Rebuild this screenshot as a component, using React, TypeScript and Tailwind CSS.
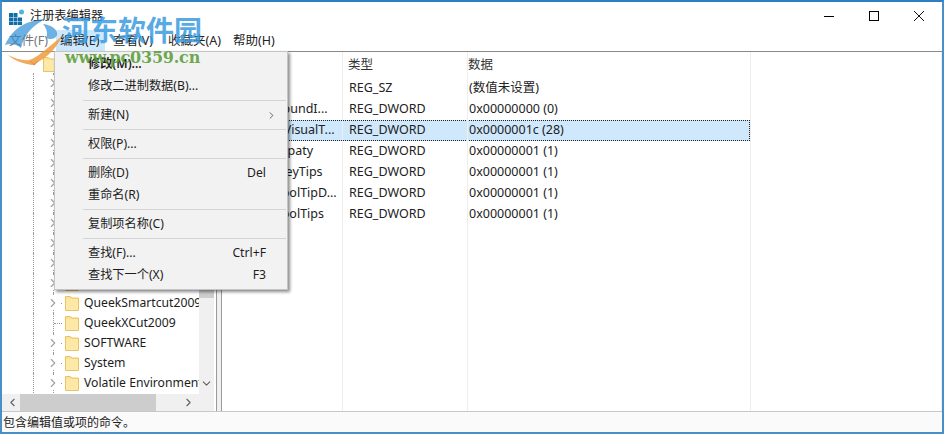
import { ChevronRight, ChevronDown, ChevronLeft } from "lucide-react";

const sans = "font-['Noto_Sans','Noto_Sans_CJK_SC',sans-serif]";

function Folder() {
  return (
    <svg width="14" height="16" viewBox="0 0 14 16" className="shrink-0">
      <path d="M0.5 1.5h5l1.5 1.5h6.5v12.5h-13z" fill="#fde08a" stroke="#e8c468" />
      <rect x="1" y="4" width="12" height="11" fill="#fce9a8" />
    </svg>
  );
}

function TreeRow({ label, arrow = true }: { label?: string; arrow?: boolean }) {
  return (
    <div className="h-5 flex items-center relative shrink-0">
      <div className="absolute left-[31px] top-0 bottom-0 border-l border-dotted border-[#9a9a9a]" />
      <div className="absolute left-[51px] top-0 bottom-0 border-l border-dotted border-[#9a9a9a]" />
      <div className="absolute left-[52px] w-2 border-t border-dotted border-[#9a9a9a]" />
      {arrow && <ChevronRight size={14} strokeWidth={1.9} className="absolute left-[44px] top-[3px] bg-white text-[#a0a0a0]" />}
      <div className="ml-[63px] flex items-center gap-[5px]">
        <Folder />
        <span className="text-[12.2px] text-[#1c1c1c] whitespace-nowrap">{label}</span>
      </div>
    </div>
  );
}

function ValueRow({ name, type, data }: { name: string; type: string; data: string }) {
  return (
    <div className="h-[21px] flex items-center text-[12.5px] text-[#222]">
      <div className="w-[120px] pl-[22px] whitespace-nowrap overflow-hidden">{name}</div>
      <div className="w-[125px] pl-[7px]">{type}</div>
      <div className="pl-[2px]">{data}</div>
    </div>
  );
}

function Item({ label, hint, arrow = false, bold = false }: { label: string; hint?: string; arrow?: boolean; bold?: boolean }) {
  return (
    <div className={`h-[22px] flex items-center pl-[33px] pr-[21px] justify-between text-[12.2px] text-[#1d1d1d] ${bold ? "font-semibold" : ""}`}>
      <span>{label}</span>
      {hint && <span>{hint}</span>}
      {arrow && <ChevronRight size={11} strokeWidth={1.6} className="-mr-[11px] text-[#333]" />}
    </div>
  );
}

function Sep() {
  return <div className="ml-[28px] mr-[1px] my-[3px] border-t border-[#d4d4d4]" />;
}

export default function App() {
  const rows = Array.from({ length: 11 });
  return (
    <div className={`relative w-[944px] h-[434px] overflow-hidden bg-white flex flex-col border-x-2 border-t-2 border-b-2 border-x-[#4a90c8] border-t-[#2d7fc1] border-b-[#4a90c8] ${sans}`}>
      {/* title bar */}
      <div className="h-[28px] flex items-center shrink-0">
        <svg width="16" height="16" viewBox="0 0 16 16" className="ml-[7px] mt-[1px]">
          <path d="M0 4h4v4H0zM4.500 4h4v4h-4zM0 8.500h4v4H0zM4.500 8.500h4v4h-4zM9 8.500h4v4H9zM0 13h4v3H0zM4.500 13h4v3h-4zM9 13h4v3H9z" fill="#0f6ea8" />
          <circle cx="12.500" cy="3" r="2.500" fill="#4db6d8" />
        </svg>
        <span className="ml-[5px] mt-[1px] text-[12.2px] text-[#222]">注册表编辑器</span>
        <div className="ml-auto flex items-center">
          <div className="w-[45px] flex justify-center"><div className="w-[10px] border-t border-black" /></div>
          <div className="w-[45px] flex justify-center"><div className="w-[10px] h-[10px] border border-black" /></div>
          <div className="w-[45px] flex justify-center mr-[1px]">
            <svg width="10" height="10" viewBox="0 0 10 10"><path d="M0 0L10 10M10 0L0 10" stroke="#111" strokeWidth="1" /></svg>
          </div>
        </div>
      </div>
      {/* menu bar */}
      <div className="h-[21px] flex items-center shrink-0 text-[12.5px] text-[#222]">
        <div className="w-[54px] pl-[7px] pt-[1px] text-[#777]">文件(F)</div>
        <div className="w-[49px] h-full flex items-center pl-[4px] pt-[1px] bg-[#cce8ff]">编辑(E)</div>
        <div className="ml-[8px] w-[55px] pt-[1px]">查看(V)</div>
        <div className="w-[65px] pt-[1px]">收藏夹(A)</div>
        <div className="pt-[1px]">帮助(H)</div>
      </div>
      {/* panes */}
      <div className="flex-1 flex bg-[#f0f0f0] border-t border-[#8a8a8a] min-h-0">
        <div className="w-[215px] bg-white flex flex-col border-r border-[#9a9a9a]">
          <div className="flex flex-1 min-h-0">
            <div className="flex-1 flex flex-col overflow-hidden pt-[1px]">
              <div className="h-5 flex items-center relative shrink-0">
                <ChevronDown size={14} strokeWidth={2} className="ml-[25px] text-[#c98a45]" />
                <div className="ml-[2px] mt-[2px]"><Folder /></div>
              </div>
              {rows.map((_, i) => <TreeRow key={i} />)}
              <TreeRow label="QueekSmartcut2009" />
              <TreeRow label="QueekXCut2009" arrow={false} />
              <TreeRow label="SOFTWARE" />
              <TreeRow label="System" />
              <TreeRow label="Volatile Environment" />
            </div>
            <div className="w-[15px] mr-[2px] shrink-0 bg-[#f0f0f0] flex flex-col justify-between">
              <div className="h-[246px] bg-[#cdcdcd]" />
              <div className="h-[15px] flex justify-center pt-[1px] mb-[3px]"><ChevronDown size={13} strokeWidth={2} className="text-[#606060]" /></div>
            </div>
          </div>
          <div className="h-[17px] bg-[#f0f0f0] flex items-center shrink-0 mr-[2px]">
            <ChevronLeft size={13} strokeWidth={2} className="ml-[4px] text-[#606060]" />
            <div className="ml-[1px] w-[136px] h-full bg-[#cdcdcd]" />
            <ChevronRight size={13} strokeWidth={2} className="ml-[26px] text-[#606060]" />
          </div>
        </div>
        <div className="ml-[4px] flex-1 bg-white border-l border-[#9a9a9a] relative">
          <div className="h-[25px] mb-[1px] flex items-center text-[12.5px] text-[#333]">
            <div className="w-[120px] h-full" />
            <div className="w-[125px] h-full pl-[6px] flex items-center pt-[1px]">类型</div>
            <div className="w-[283px] h-full pl-[1px] flex items-center pt-[1px]">数据</div>
          </div>
          <div className="absolute left-[120px] top-0 bottom-0 border-l border-[#eeeeee]" />
          <div className="absolute left-[245px] top-0 bottom-0 border-l border-[#eeeeee]" />
          <div className="absolute left-[528px] top-0 bottom-0 border-l border-[#eeeeee]" />
          <div className="w-[528px]">
            <ValueRow name="(默认)" type="REG_SZ" data="(数值未设置)" />
            <ValueRow name="ForegroundI..." type="REG_DWORD" data="0x00000000 (0)" />
            <div className="bg-[#cfe8fc] outline-1 outline-dotted outline-offset-[-1px] outline-[#222]">
              <ValueRow name="EnableVisualT..." type="REG_DWORD" data="0x0000001c (28)" />
            </div>
            <ValueRow name="MenuOpaty" type="REG_DWORD" data="0x00000001 (1)" />
            <ValueRow name="MenuKeyTips" type="REG_DWORD" data="0x00000001 (1)" />
            <ValueRow name="ShowToolTipD..." type="REG_DWORD" data="0x00000001 (1)" />
            <ValueRow name="ShowToolTips" type="REG_DWORD" data="0x00000001 (1)" />
          </div>
        </div>
        <div className="w-[1px]" />
      </div>
      {/* status bar */}
      <div className="h-[21px] flex items-center shrink-0 pl-[1px] pt-[2px] text-[12px] text-[#222] bg-[#fafafa] border-t border-[#c8c8c8]">包含编辑值或项的命令。</div>

      {/* context menu */}
      <div className="absolute left-[52px] top-[49px] w-[234px] h-[239px] pt-[1px] bg-[#f2f2f2] border border-[#c4c4c4] shadow-[2px_2px_3px_rgba(0,0,0,0.45)]">
        <Item label="修改(M)..." bold />
        <Item label="修改二进制数据(B)..." />
        <Sep />
        <Item label="新建(N)" arrow />
        <Sep />
        <Item label="权限(P)..." />
        <Sep />
        <Item label="删除(D)" hint="Del" />
        <Item label="重命名(R)" />
        <Sep />
        <Item label="复制项名称(C)" />
        <Sep />
        <Item label="查找(F)..." hint="Ctrl+F" />
        <Item label="查找下一个(X)" hint="F3" />
      </div>

      {/* watermark */}
      <div className="absolute left-0 top-[10px] pointer-events-none">
        <svg width="64" height="60" viewBox="0 0 64 60">
          <path d="M3 33C10 18 22 8 44 7C32 12 22 22 19 36C14 32 9 31 3 33Z" fill="#2f8fd6" fillOpacity="0.7" />
          <path d="M41 12C50 13 56 18 55 23C54 27 48 28 44 26C46 22 45 17 41 12Z" fill="#2f8fd6" fillOpacity="0.7" />
          <path d="M6 43C14 47 24 50 30 47C38 43 48 34 60 24C56 34 46 46 30 53C24 52 14 50 6 43Z" fill="#ee9b3c" fillOpacity="0.85" />
        </svg>
      </div>
      <div className="absolute left-[60px] top-[10px] text-[28px] font-bold leading-[34px] text-[#3a9be0]/85 font-['Noto_Sans_CJK_SC',sans-serif] pointer-events-none">河东软件园</div>
      <div className="absolute left-[63px] top-[46px] text-[16px] font-bold leading-[20px] tracking-[-0.2px] text-[#5a9e3a]/90 font-['DejaVu_Serif',serif] pointer-events-none">www.pc0359.cn</div>
    </div>
  );
}
